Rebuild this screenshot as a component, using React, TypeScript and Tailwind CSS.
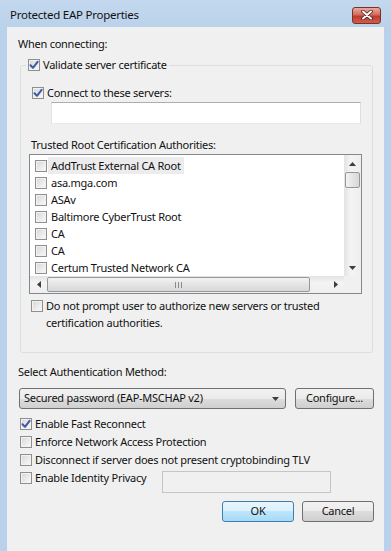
import React from "react"

const certs = [
  "AddTrust External CA Root",
  "asa.mga.com",
  "ASAv",
  "Baltimore CyberTrust Root",
  "CA",
  "CA",
  "Certum Trusted Network CA",
]

function Check({ checked = false }: { checked?: boolean }) {
  return (
    <span className="w-[12px] h-[12px] shrink-0 border border-[#8e8f8f] bg-[linear-gradient(135deg,#d6d6d6,#fbfbfb)] shadow-[inset_0_0_0_1px_#f2f2f2] flex items-center justify-center">
      {checked && (
        <svg width="10" height="10" viewBox="0 0 10 10">
          <path d="M1.5 5.2 L4 7.8 L8.6 1.8" fill="none" stroke="#3f5aa4" strokeWidth="2" strokeLinecap="round" strokeLinejoin="round" />
        </svg>
      )}
    </span>
  )
}

function WinButton({ label, primary = false, className = "" }: { label: string; primary?: boolean; className?: string }) {
  return (
    <div
      className={`h-[21px] rounded-[3px] border flex items-center justify-center ${
        primary
          ? "border-[#3c7fb1] bg-[linear-gradient(#eaf6fd_0%,#d9f0fc_50%,#bee6fd_50%,#a7d9f5_100%)]"
          : "border-[#707070] bg-[linear-gradient(#f2f2f2_0%,#ebebeb_50%,#dddddd_50%,#cfcfcf_100%)]"
      } ${className}`}
    >
      {label}
    </div>
  )
}

function Arrow({ dir }: { dir: "up" | "down" | "left" | "right" }) {
  const d = {
    up: "M0 4 L3.5 0 L7 4 Z",
    down: "M0 0 L7 0 L3.5 4 Z",
    left: "M4 0 L4 7 L0 3.5 Z",
    right: "M0 0 L4 3.5 L0 7 Z",
  }[dir]
  const horiz = dir === "left" || dir === "right"
  return (
    <svg width={horiz ? 4 : 7} height={horiz ? 7 : 4} viewBox={horiz ? "0 0 4 7" : "0 0 7 4"}>
      <path d={d} fill="#3d3d3d" />
    </svg>
  )
}

export default function App() {
  return (
    <div className="w-[391px] h-[551px] bg-[#b9d1ea] flex flex-col overflow-hidden font-['Noto_Sans',sans-serif] text-[11px] tracking-[-0.25px] text-[#111] whitespace-nowrap">
      {/* title bar */}
      <div className="h-[27px] shrink-0 flex items-center justify-between pl-[10px] pr-[10px] bg-[linear-gradient(#c3d8ee,#bad2ea)]">
        <span className="leading-[16px] text-[11.5px] mt-[3px]">Protected EAP Properties</span>
        <div className="w-[29px] h-[17px] mt-[3px] rounded-[3px] border border-[#7c302a] bg-[linear-gradient(#e9a99f_0%,#d46a5c_45%,#c0392b_55%,#cf5d4c_100%)] flex items-center justify-center">
          <svg width="12" height="10" viewBox="0 0 12 10">
            <path d="M2 1.5 L10 8.5 M10 1.5 L2 8.5" stroke="#4a1f1b" strokeWidth="3.6" strokeLinecap="round" />
            <path d="M2 1.5 L10 8.5 M10 1.5 L2 8.5" stroke="#ffffff" strokeWidth="2" strokeLinecap="round" />
          </svg>
        </div>
      </div>

      {/* client */}
      <div className="mx-[7px] flex-1 bg-[#f0f0f0] flex flex-col">
        <div className="pt-[9px] pl-[11px] h-[25px] leading-[16px]">When connecting:</div>

        <fieldset className="ml-[13px] mr-[11px] mt-[5px] border border-[#d5dfe5] rounded-[3px] pb-[21px]">
          <legend className="ml-[5px] px-[2px] h-[16px] flex items-center gap-[3px] leading-[16px]">
            <Check checked />
            <span>Validate server certificate</span>
          </legend>

          <div className="mt-[12px] pl-[11px] h-[16px] flex items-center gap-[3px]">
            <Check checked />
            <span className="leading-[16px]">Connect to these servers:</span>
          </div>
          <div className="mt-[1px] ml-[30px] w-[310px] h-[22px] bg-white border border-[#abadb3] border-r-[#dbdfe6] border-b-[#e3e9ef] border-l-[#e2e3ea]" />

          <div className="mt-[13px] pl-[10px] h-[16px] leading-[16px]">Trusted Root Certification Authorities:</div>

          <div className="mt-[1px] ml-[8px] w-[333px] h-[140px] border border-[#828790] bg-white grid grid-cols-[1fr_17px] grid-rows-[1fr_17px]">
            <div className="pt-[2px] pl-[5px] flex flex-col overflow-hidden">
              {certs.map((c, i) => (
                <div key={i} className="h-[17px] flex items-center gap-[1px]">
                  <Check />
                  <span className={`px-[3px] leading-[17px] ${i === 0 ? "bg-[#ececec]" : ""}`}>{c}</span>
                </div>
              ))}
            </div>

            {/* vertical scrollbar */}
            <div className="bg-[linear-gradient(90deg,#e3e3e3,#f4f4f4_40%,#eeeeee)] flex flex-col">
              <div className="h-[17px] flex items-center justify-center">
                <Arrow dir="up" />
              </div>
              <div className="h-[16px] mx-[1px] rounded-[2px] border border-[#979797] bg-[linear-gradient(90deg,#f3f3f3,#e4e4e4_50%,#d8d8d8)]" />
              <div className="flex-1" />
              <div className="h-[17px] flex items-center justify-center">
                <Arrow dir="down" />
              </div>
            </div>

            {/* horizontal scrollbar */}
            <div className="bg-[linear-gradient(#e3e3e3,#f4f4f4_40%,#eeeeee)] flex items-stretch">
              <div className="w-[17px] flex items-center justify-center">
                <Arrow dir="left" />
              </div>
              <div className="w-[263px] my-[1px] rounded-[2px] border border-[#979797] bg-[linear-gradient(#f3f3f3,#e4e4e4_50%,#d8d8d8)] flex items-center justify-center gap-[2px]">
                <span className="w-[1px] h-[6px] bg-[#8a8a8a]" />
                <span className="w-[1px] h-[6px] bg-[#8a8a8a]" />
                <span className="w-[1px] h-[6px] bg-[#8a8a8a]" />
              </div>
              <div className="flex-1" />
              <div className="w-[17px] flex items-center justify-center">
                <Arrow dir="right" />
              </div>
            </div>
            <div className="bg-[#f0f0f0]" />
          </div>

          <div className="mt-[3px] pl-[10px] flex items-start gap-[3px]">
            <span className="mt-[3px]">
              <Check />
            </span>
            <span className="leading-[17px]">
              Do not prompt user to authorize new servers or trusted
              <br />
              certification authorities.
            </span>
          </div>
        </fieldset>

        <div className="mt-[11px] pl-[11px] h-[16px] leading-[16px]">Select Authentication Method:</div>

        <div className="mt-[8px] ml-[12px] flex gap-[9px]">
          <div className="w-[267px] h-[21px] rounded-[3px] border border-[#707070] bg-[linear-gradient(#f2f2f2_0%,#ebebeb_50%,#dddddd_50%,#cfcfcf_100%)] flex items-center justify-between pl-[4px] pr-[6px]">
            <span>Secured password (EAP-MSCHAP v2)</span>
            <Arrow dir="down" />
          </div>
          <WinButton label="Configure..." className="w-[79px]" />
        </div>

        <div className="mt-[6px] ml-[13px] flex flex-col">
          <div className="h-[18px] flex items-center gap-[3px]">
            <Check checked />
            <span>Enable Fast Reconnect</span>
          </div>
          <div className="h-[18px] flex items-center gap-[3px]">
            <Check />
            <span>Enforce Network Access Protection</span>
          </div>
          <div className="h-[18px] flex items-center gap-[3px]">
            <Check />
            <span>Disconnect if server does not present cryptobinding TLV</span>
          </div>
          <div className="flex items-start">
            <div className="h-[18px] w-[142px] flex items-center gap-[3px]">
              <Check />
              <span>Enable Identity Privacy</span>
            </div>
            <div className="mt-[2px] w-[169px] h-[22px] border border-[#c5c5c5] bg-[#f0f0f0]" />
          </div>
        </div>

        <div className="mt-[8px] pr-[10px] flex justify-end gap-[8px]">
          <WinButton label="OK" primary className="w-[72px]" />
          <WinButton label="Cancel" className="w-[72px]" />
        </div>
      </div>
    </div>
  )
}
